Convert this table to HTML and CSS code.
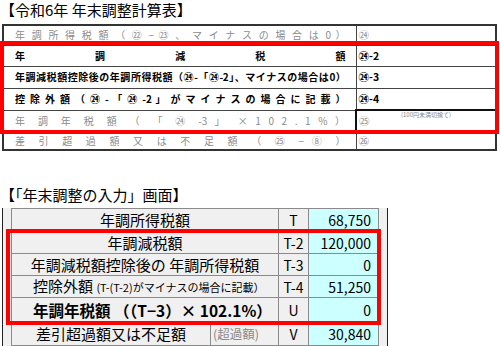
FILE: index.html
```html
<!DOCTYPE html>
<html lang="ja">
<head>
<meta charset="utf-8">
<link rel="stylesheet" href="styles.css">
</head>
<body>
<h1 class="title">【令和6年 年末調整計算表】</h1>
<div class="sheet">
  <table class="calc">
    <tr class="row-a">
      <td class="lbl gray">年 調 所 得 税 額 （ ㉒ − ㉓ 、 マ イ ナ ス の 場 合 は 0 ）</td>
      <td class="no gray">㉔</td>
    </tr>
    <tr class="row-b">
      <td class="lbl bold">年 調 減 税 額</td>
      <td class="no bold">㉔-2</td>
    </tr>
    <tr class="row-c">
      <td class="lbl bold tight">年調減税額控除後の年調所得税額（㉔-「㉔-2」、マイナスの場合は0）</td>
      <td class="no bold">㉔-3</td>
    </tr>
    <tr class="row-d">
      <td class="lbl bold">控 除 外 額 （ ㉔ - 「 ㉔ -2 」 が マ イ ナ ス の 場 合 に 記 載 ）</td>
      <td class="no bold">㉔-4</td>
    </tr>
    <tr class="row-e">
      <td class="lbl gray">年 調 年 税 額 （ 「 ㉔ -3 」 × 1 0 2 . 1 % ）</td>
      <td class="no gray boxed"><span class="note">(100円未満切捨て)</span>㉕</td>
    </tr>
    <tr class="row-f">
      <td class="lbl gray">差 引 超 過 額 又 は 不 足 額 （ ㉕ − ⑧ ）</td>
      <td class="no gray">㉖</td>
    </tr>
  </table>
  <div class="mark mark-top"></div>
</div>

<h2 class="title title2">【「年末調整の入力」画面】</h2>
<div class="screen">
  <div class="frame">
    <table class="input">
      <colgroup><col class="c1"><col class="c2"><col class="c3"><col class="c4"></colgroup>
      <tr class="first">
        <td class="name" colspan="2">年調所得税額</td>
        <td class="code">T</td>
        <td class="val">68,750</td>
      </tr>
      <tr>
        <td class="name" colspan="2">年調減税額</td>
        <td class="code">T-2</td>
        <td class="val">120,000</td>
      </tr>
      <tr>
        <td class="name" colspan="2">年調減税額控除後の 年調所得税額</td>
        <td class="code">T-3</td>
        <td class="val">0</td>
      </tr>
      <tr>
        <td class="name left" colspan="2">控除外額 <small>(T-(T-2)がマイナスの場合に記載）</small></td>
        <td class="code">T-4</td>
        <td class="val">51,250</td>
      </tr>
      <tr class="tall">
        <td class="name left strong" colspan="2">年調年税額 （（T−3）× 102.1%）</td>
        <td class="code">U</td>
        <td class="val">0</td>
      </tr>
      <tr class="last">
        <td class="name">差引超過額又は不足額</td>
        <td class="name sub">(超過額)</td>
        <td class="code">V</td>
        <td class="val">30,840</td>
      </tr>
    </table>
  </div>
  <div class="mark mark-bottom"></div>
</div>
</body>
</html>
```
FILE: styles.css
```css
* { box-sizing: border-box; }
html, body { margin: 0; padding: 0; background: #fff; }
body {
  width: 500px;
  height: 346px;
  overflow: hidden;
  font-family: "Noto Sans CJK JP", "Noto Sans", sans-serif;
  color: #000;
}
.title {
  margin: 0 0 4px 0;
  font-size: 15px;
  line-height: 20px;
  font-weight: normal;
  letter-spacing: 0;
}
.title2 {
  margin: 34px 0 3px 0;
}

/* ---------- upper calculation sheet ---------- */
.sheet {
  position: relative;
}
.calc {
  margin-left: 2px;
  width: 495px;
  border-collapse: collapse;
  border: 2px solid #333;
  table-layout: fixed;
}
.calc td {
  border: 1px solid #444;
  font-size: 10px;
  line-height: 12px;
  padding: 0;
  white-space: nowrap;
  overflow: hidden;
}
.calc .lbl {
  width: 353px;
  padding: 0 10px 0 11px;
  text-align: justify;
  text-align-last: justify;
}
.calc .no {
  padding-left: 2px;
  font-size: 10.5px;
  position: relative;
}
.calc .gray { color: #8c8c8c; }
.calc .bold { font-weight: bold; color: #000; }
.calc .tight { letter-spacing: -0.35px; }
.row-a td { height: 20px; }
.row-b td { height: 21px; }
.row-c td { height: 22px; }
.row-d td { height: 22px; }
.row-e td { height: 22px; }
.row-f td { height: 18px; }
.calc .boxed { border: 2px solid #111; }
.note {
  position: absolute;
  top: 1px;
  left: 0;
  right: 0;
  text-align: center;
  font-size: 6px;
  line-height: 6px;
  color: #888;
}

.mark {
  position: absolute;
  border: 4px solid #f00;
  pointer-events: none;
}
.mark-top {
  left: 0;
  top: 17px;
  width: 499px;
  height: 93px;
}

/* ---------- lower input screen ---------- */
.screen {
  position: relative;
}
.frame {
  margin-left: 2px;
  width: 386px;
  padding-left: 8px;
  border-left: 1px solid #222;
  border-right: 1px solid #222;
  background: #f0f0f0;
  height: 140px;
}
.input {
  width: 367px;
  border-collapse: collapse;
  table-layout: fixed;
  font-size: 15px;
}
.input col.c1 { width: 199px; }
.input col.c2 { width: 68px; }
.input col.c3 { width: 30px; }
.input col.c4 { width: 70px; }
.input td {
  border: 1px solid #8a8a8a;
  height: 22px;
  padding: 0;
  line-height: 18px;
  white-space: nowrap;
  overflow: hidden;
}
.input tr.first td { height: 23px; }
.input tr.tall td { height: 25px; }
.input tr.last td { height: 23px; }
.input .name {
  background: #f0f0f0;
  text-align: center;
}
.input .name.left {
  text-align: left;
  padding-left: 21px;
}
.input .name small {
  font-size: 11px;
}
.input .strong {
  font-weight: bold;
  font-size: 15.5px;
}
.input .sub {
  color: #8a8a8a;
  font-size: 12.5px;
  text-align: left;
  padding-left: 2px;
}
.input .code {
  background: #f0f0f0;
  text-align: center;
  font-size: 14px;
}
.input .val {
  background: #ccffff;
  text-align: right;
  padding-right: 7px;
  font-size: 14px;
}
.mark-bottom {
  left: 6px;
  top: 21px;
  width: 375px;
  height: 96px;
}
```
